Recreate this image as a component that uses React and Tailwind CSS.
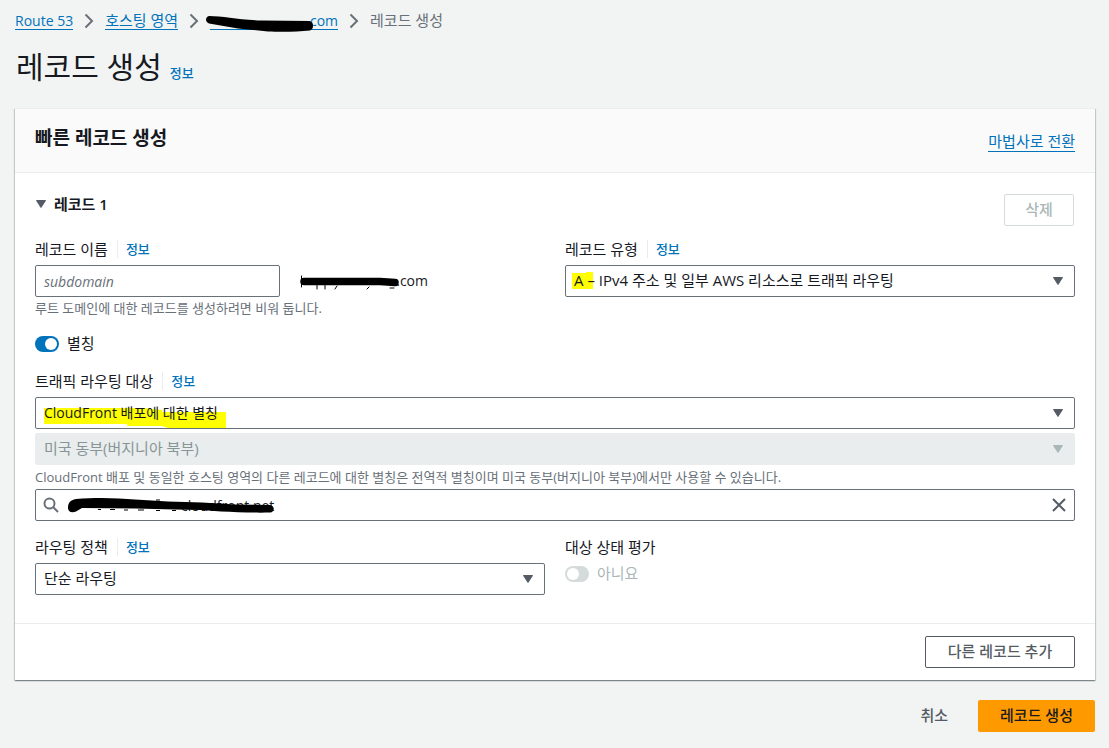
import { useState } from "react";
import { clsx } from "clsx";

function Caret({ className }) {
  return (
    <svg viewBox="0 0 10 8" className={clsx("w-2.5 h-2", className)} aria-hidden="true">
      <path d="M0.5 0.5h9L5 7.5z" fill="currentColor" stroke="currentColor" strokeLinejoin="round" />
    </svg>
  );
}

function Chevron() {
  return (
    <svg viewBox="0 0 10 16" className="w-2.5 h-4 text-[#687078]" fill="none" aria-hidden="true">
      <path d="M1.5 1.5L8 8l-6.5 6.5" stroke="currentColor" strokeWidth="2" />
    </svg>
  );
}

function InfoLink() {
  return (
    <a href="#info" className="text-[13px] leading-5 font-medium text-[#0073bb]">
      정보
    </a>
  );
}

function FieldLabel({ htmlFor, children }) {
  return (
    <div className="flex items-center h-5 mb-1.5">
      <label htmlFor={htmlFor} className="text-[15px] leading-5">
        {children}
      </label>
      <span className="h-[18px] ml-[9px] pl-2 border-l border-[#eaeded] flex items-center">
        <InfoLink />
      </span>
    </div>
  );
}

function SelectField({ id, label, value, disabled, large, marker }) {
  return (
    <div className="relative">
      {marker}
      <select
        id={id}
        aria-label={label}
        disabled={disabled}
        className={clsx(
          "relative block w-full h-8 pl-2 pr-10 appearance-none rounded-xs border",
          large ? "text-[15px]" : "text-sm",
          disabled
            ? "bg-[#e9eded] border-[#e9eded] text-[#879596] opacity-100"
            : "bg-transparent border-[#687078]"
        )}
      >
        <option>{value}</option>
      </select>
      <Caret
        className={clsx(
          "absolute right-3 top-3 pointer-events-none",
          disabled ? "text-[#aab7b8]" : "text-[#545b64]"
        )}
      />
    </div>
  );
}

function Toggle({ id, label, checked, disabled, onChange }) {
  return (
    <div className="flex items-center gap-2 h-[18px]">
      <input
        id={id}
        type="checkbox"
        role="switch"
        checked={checked}
        disabled={disabled}
        onChange={onChange}
        className="appearance-none w-6 h-4 p-0.5 rounded-full bg-[#d5dbdb] checked:bg-[#0073bb] flex checked:justify-end before:block before:size-3 before:rounded-full before:bg-white"
      />
      <label
        htmlFor={id}
        className={clsx("text-[15px] leading-4 pb-0.5", disabled && "text-[#aab7b8]")}
      >
        {label}
      </label>
    </div>
  );
}

export default function App() {
  const [alias, setAlias] = useState(true);
  const [target, setTarget] = useState("cloudfront.net");

  return (
    <div className="min-h-screen bg-[#f2f3f3] text-[#16191f] px-3.5 pt-[11px] pb-4 font-['Open_Sans','Noto_Sans_CJK_KR',sans-serif] text-sm">
      <nav aria-label="breadcrumb" className="flex items-center h-[19px] leading-[17px]">
        <a href="#route53" className="ml-px border-b border-[#0073bb] text-[#0073bb]">
          Route 53
        </a>
        <span className="mx-[11px]"><Chevron /></span>
        <a href="#zones" className="border-b border-[#0073bb] text-[#0073bb] text-[15px]">
          호스팅 영역
        </a>
        <span className="mx-[11px]"><Chevron /></span>
        <a
          href="#zone"
          className="relative w-32 text-right border-b border-[#0073bb] text-[#0073bb]"
        >
          com
          <svg
            viewBox="0 0 110 18"
            className="absolute -left-[5px] top-0.5 w-[110px] h-[18px]"
            aria-hidden="true"
          >
            <path
              d="M4 2C18 2 34 6 57 6.5L105 7C109 9 109 15 105 16.5C92 18 75 18 63 17.500L33 14.500L4 9.500C0 8 0 3 4 2z"
              fill="#000"
            />
          </svg>
        </a>
        <span className="mx-[11px]"><Chevron /></span>
        <span className="text-[15px] text-[#687078]">레코드 생성</span>
      </nav>

      <div className="flex items-baseline gap-2 mt-[17px] ml-0.5 h-10 leading-10">
        <h1 className="text-[30px]">레코드 생성</h1>
        <InfoLink />
      </div>

      <main className="mt-[21px] ml-px bg-white border-t border-[#eaeded] shadow-[0_1px_1px_0_rgba(0,28,36,0.3),1px_1px_1px_0_rgba(0,28,36,0.15),-1px_1px_1px_0_rgba(0,28,36,0.15)]">
        <header className="flex items-start justify-between h-16 px-5 bg-[#fafafa] border-b border-[#eaeded]">
          <h2 className="mt-[17px] text-[19px] leading-6 font-bold">빠른 레코드 생성</h2>
          <a
            href="#wizard"
            className="mt-6 text-[15px] leading-[17px] pb-px border-b border-[#0073bb] text-[#0073bb]"
          >
            마법사로 전환
          </a>
        </header>

        <div className="px-5 pt-[21px] pb-7">
          <div className="flex items-start justify-between">
            <button type="button" className="flex items-center gap-2 text-[15px] leading-5 font-semibold">
              <Caret className="ml-px text-[#545b64]" />
              레코드 1
            </button>
            <button
              type="button"
              disabled
              className="h-8 w-[70px] mr-px border border-[#d5dbdb] rounded-xs text-[15px] font-medium text-[#aab7b8] bg-white"
            >
              삭제
            </button>
          </div>

          <div className="grid grid-cols-2 gap-5 mt-[13px]">
            <div>
              <FieldLabel htmlFor="record-name">레코드 이름</FieldLabel>
              <div className="grid grid-cols-2 gap-5 items-center">
                <input
                  id="record-name"
                  type="text"
                  placeholder="subdomain"
                  className="h-8 w-full px-2 border border-[#687078] rounded-xs placeholder:italic placeholder:text-[#687078]"
                />
                <div className="relative w-32 text-right leading-5">
                  .com
                  <svg
                    viewBox="0 0 100 20"
                    className="absolute left-0 top-0 w-[100px] h-5"
                    fill="none"
                    stroke="#000"
                    strokeLinecap="round"
                    aria-hidden="true"
                  >
                    <path d="M4 10.5H80L95 11.5" strokeWidth="7.5" />
                    <path d="M1.5 5v11M17 12v6M25 12v6M37 15l-2 3M69 16l-2 2M90 17h4" strokeWidth="1" />
                  </svg>
                </div>
              </div>
              <p className="text-[13px] leading-[22px] text-[#687078]">
                루트 도메인에 대한 레코드를 생성하려면 비워 둡니다.
              </p>
            </div>
            <div>
              <FieldLabel htmlFor="record-type">레코드 유형</FieldLabel>
              <SelectField
                id="record-type"
                large
                value="A – IPv4 주소 및 일부 AWS 리소스로 트래픽 라우팅"
                marker={
                  <svg viewBox="0 0 22 18" className="absolute left-[7px] top-[7px] w-[22px] h-[18px]" aria-hidden="true">
                    <path d="M0 1h14V0h7v17H0z" fill="#ff0" />
                  </svg>
                }
              />
            </div>
          </div>

          <div className="mt-4">
            <Toggle
              id="alias"
              label="별칭"
              checked={alias}
              onChange={(event) => setAlias(event.target.checked)}
            />
          </div>

          <div className="mt-[18px]">
            <FieldLabel htmlFor="endpoint">트래픽 라우팅 대상</FieldLabel>
            <div className="flex flex-col gap-1">
              <SelectField
                id="endpoint"
                value="CloudFront 배포에 대한 별칭"
                marker={
                  <svg viewBox="0 0 182 21" className="absolute left-[9px] top-[11px] w-[182px] h-[21px]" aria-hidden="true">
                    <path d="M0 0h100l18 2v2h64v16h-58l-6-2H83v-2H0z" fill="#ff0" />
                  </svg>
                }
              />
              <SelectField id="region" label="리전" large disabled value="미국 동부(버지니아 북부)" />
            </div>
            <p className="text-[13px] leading-6 text-[#687078]">
              CloudFront 배포 및 동일한 호스팅 영역의 다른 레코드에 대한 별칭은 전역적 별칭이며 미국 동부(버지니아 북부)에서만 사용할 수 있습니다.
            </p>
            <div className="relative flex items-center h-8 pl-[7px] pr-2 border border-[#687078] rounded-xs">
              <svg viewBox="0 0 16 16" className="size-4 text-[#687078]" fill="none" stroke="currentColor" strokeWidth="2" aria-hidden="true">
                <circle cx="6.5" cy="6.5" r="5" />
                <path d="M10 10l5 5" />
              </svg>
              <input
                type="text"
                aria-label="배포 선택"
                value={target}
                onChange={(event) => setTarget(event.target.value)}
                className="flex-1 h-full pl-[122px] outline-none"
              />
              <svg
                viewBox="0 0 208 18"
                className="absolute left-8 top-1.5 w-52 h-[18px] pointer-events-none"
                aria-hidden="true"
              >
                <path
                  d="M0 12C0 7 2 4 8 3C30 1 50 2 67 3.500L100 5.500L134 6.500L167 8.500L202 9C207 10 207 16 202 16.500C185 17 168 16 153 15.500L134 14L107 13.500L67 12.500L14 12L8 15.500C4 17 0 16 0 12z"
                  fill="#000"
                />
                <path d="M30 13.500h3M42 13.500h5M56 14h4M70 14h6M88 4h4M88 14.500h4M104 14.500h4" stroke="#000" />
              </svg>
              <button type="button" aria-label="지우기" onClick={() => setTarget("")}>
                <svg viewBox="0 0 14 14" className="size-3.5 text-[#545b64]" fill="none" stroke="currentColor" strokeWidth="2" aria-hidden="true">
                  <path d="M1 1l12 12M13 1L1 13" />
                </svg>
              </button>
            </div>
          </div>

          <div className="grid grid-cols-2 gap-5 mt-4">
            <div>
              <FieldLabel htmlFor="policy">라우팅 정책</FieldLabel>
              <SelectField id="policy" large value="단순 라우팅" />
            </div>
            <div>
              <label htmlFor="health" className="block mb-2 text-[15px] leading-5">
                대상 상태 평가
              </label>
              <Toggle id="health" label="아니요" checked={false} disabled />
            </div>
          </div>
        </div>

        <footer className="flex justify-end px-5 py-3 border-t border-[#eaeded]">
          <button
            type="button"
            className="h-8 w-[150px] border border-[#545b64] rounded-xs text-[15px] font-medium text-[#545b64] bg-white"
          >
            다른 레코드 추가
          </button>
        </footer>
      </main>

      <div className="flex justify-end gap-2.5 mt-5">
        <button type="button" className="h-8 px-5 text-[15px] font-medium text-[#545b64]">
          취소
        </button>
        <button type="submit" className="h-8 w-[117px] rounded-xs bg-[#ff9900] text-[15px] font-medium">
          레코드 생성
        </button>
      </div>
    </div>
  );
}
